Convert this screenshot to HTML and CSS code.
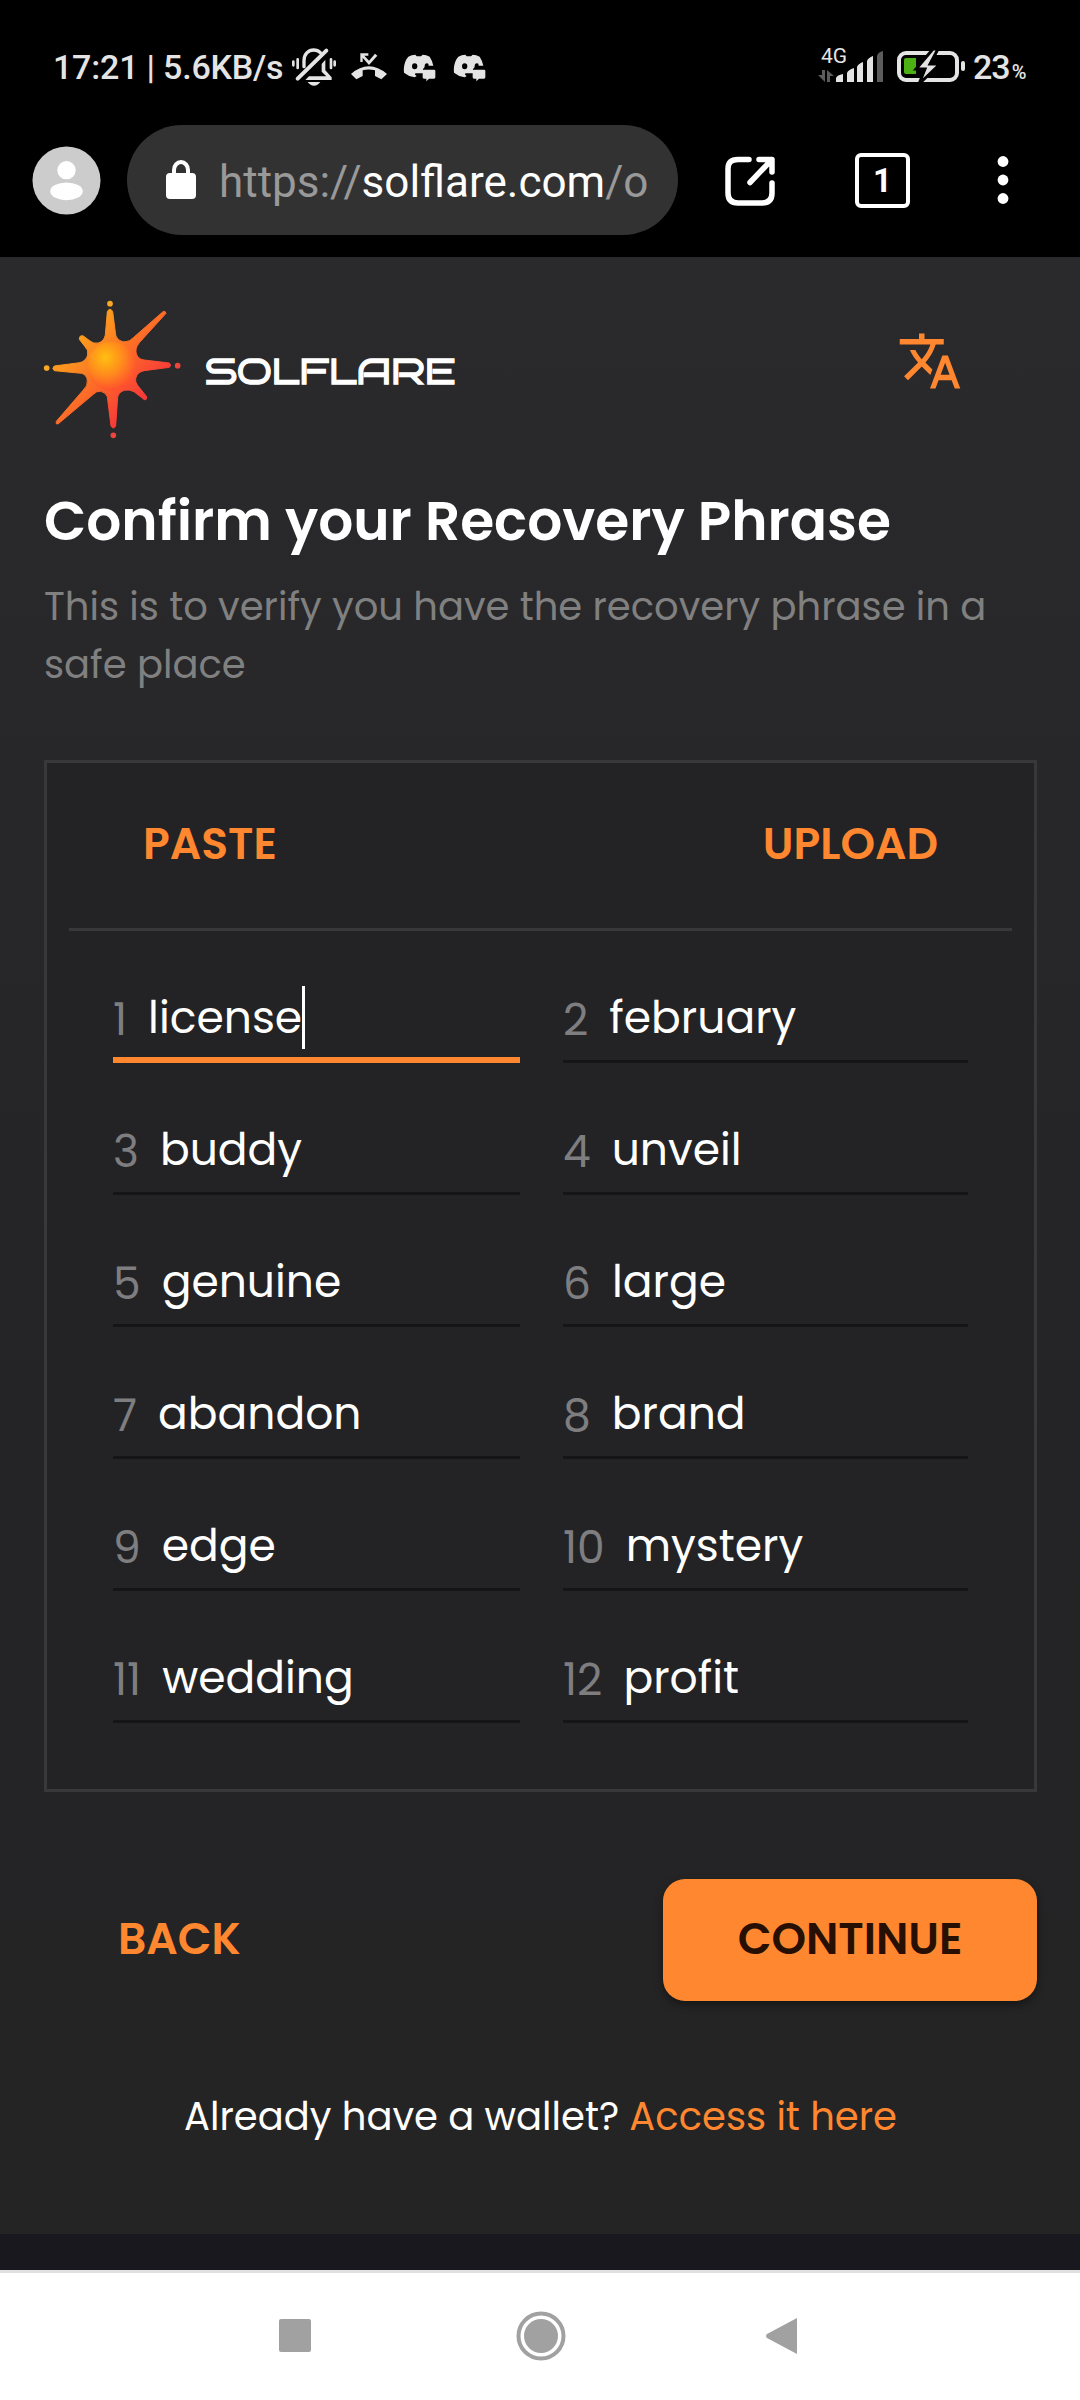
FILE: index.html
```html
<!DOCTYPE html>
<html lang="en">
<head>
<meta charset="utf-8">
<title>Solflare</title>
<link rel="stylesheet" href="styles.css">
</head>
<body>
<div class="status">
  <span class="clock">17:21 | 5.6KB/s</span>
  <svg class="st-icons" viewBox="0 0 630 156" fill="#e4e4e4">
    <g fill="none" stroke="#e4e4e4" stroke-linecap="round">
      <path d="M57 80V62C57 42 70 30 86 30C94 30 101 33 106 38" stroke-width="10"/>
      <path d="M38 116L124 32" stroke-width="12"/>
      <path d="M25 65V76M38 58V84M138 58V84M149 65V76" stroke-width="8"/>
    </g>
    <path d="M121 59V91L140 112V120H61L72 109H124L110 95V72Z"/>
    <path d="M68 126H106Q98 137 87 137Q76 137 68 126Z"/>
    <path d="M198 102Q251 56 306 102L289 118L270 108V91Q251 86 233 91V108L214 118Z"/>
    <path d="M226 40H250V47H238L252 62L270 41L277 47L252 75L233 53V66H226Z"/>
    <g id="chat">
      <path fill-rule="evenodd" d="M357 98C355 78 360 61 370 50Q380 44 391 44L395 49H408L413 44Q424 44 434 50Q441 60 445 77H431Q432 70 426 70Q419 70 419 79Q419 84 414 87V100H391L390 104L395 108L389 112Q370 109 357 98ZM389 70A8 9 0 1 0 389 88A8 9 0 1 0 389 70Z"/>
      <path d="M417 89H447Q451 89 451 93V112Q451 116 447 116H432L424 124V116H417Q413 116 413 112V93Q413 89 417 89Z"/>
    </g>
    <use href="#chat" x="150"/>
  </svg>
  <span class="grow"></span>
  <div class="net">
    <span class="net-type">4G</span>
    <svg class="arrows" viewBox="0 0 16 12" fill="#5c5c5c"><path d="M4 0H7V12L0 5H4ZM9 12V0L16 6H12V12Z"/></svg>
  </div>
  <svg class="bars" viewBox="0 0 48 32" fill="#e4e4e4"><path d="M0 31V27Q1 24 7 23V31ZM11 31V22Q12 19 18 17V31ZM21 31V16Q22 13 27 11V31ZM31 31V10Q32 7 37 5V31Z"/><path fill="#5c5c5c" d="M41 31V5Q42 1 47 0V31Z"/></svg>
  <svg class="battery" viewBox="0 0 70 32"><rect x="2" y="3" width="58" height="27" rx="7" fill="none" stroke="#e4e4e4" stroke-width="4"/><path fill="#4caf13" d="M9 8H19V24H9Q7 24 7 22V10Q7 8 9 8Z"/><path d="M36 -1L19 19H28L22 34L43 14H33L41 -1Z" fill="#e4e4e4" stroke="#000" stroke-width="3"/><rect x="64" y="11" width="4" height="10" rx="2" fill="#e4e4e4"/></svg>
  <span class="pct">23<small>%</small></span>
</div>
<div class="toolbar">
  <svg class="avatar" viewBox="0 0 70 70"><circle cx="35" cy="35" r="34.500" fill="#ccc"/><circle cx="35" cy="24.500" r="9.300" fill="#fff"/><ellipse cx="35" cy="46" rx="16.500" ry="9" fill="#fff"/></svg>
  <div class="url">
    <svg class="lock" viewBox="0 0 30 40"><path d="M8 16V10a7 8 0 0 1 14 0V16" fill="none" stroke="#fff" stroke-width="4"/><rect y="13" width="30" height="26" rx="4" fill="#fff"/></svg>
    <span class="address">https://<b>solflare.com</b>/o</span>
  </div>
  <svg class="share" viewBox="0 0 50 50" fill="none" stroke="#fff" stroke-width="5.500" stroke-linecap="round" stroke-linejoin="round"><path d="M24 3.500H13Q3 3.500 3 13V37Q3 47 13 47H37Q47 47 47 37V27M34 3.500H47V16M46 4.500L25 26.500"/></svg>
  <span class="tabs">1</span>
  <svg class="dots" viewBox="0 0 12 50" fill="#fff"><circle cx="6" cy="6.500" r="5.400"/><circle cx="6" cy="25" r="5.400"/><circle cx="6" cy="43.500" r="5.400"/></svg>
</div>
<main class="page">
  <header class="brand">
    <svg class="sun" viewBox="30 54 435 426">
      <defs>
        <linearGradient id="ray" gradientUnits="userSpaceOnUse" x1="140" y1="160" x2="335" y2="350"><stop offset="0" stop-color="#fba41c"/><stop offset=".5" stop-color="#fd7026"/><stop offset="1" stop-color="#f73b38"/></linearGradient>
        <radialGradient id="core" gradientUnits="userSpaceOnUse" cx="226" cy="233" r="102"><stop offset="0" stop-color="#ffbf10"/><stop offset=".5" stop-color="#ff8d1c"/><stop offset="1" stop-color="#ff4f2e"/></radialGradient>
      </defs>
      <path fill="url(#ray)" stroke="url(#ray)" stroke-width="3" d="M232 95Q240 80 248 95L257 165C262 180 275 187 288 185Q300 184 310 173L398 96Q406 90 408 100L328 188Q314 205 319 222Q325 238 342 240L418 249Q426 256 418 262L342 272Q322 276 317 295Q315 305 322 315L350 350Q352 360 343 359L312 335Q298 327 283 331Q265 337 263 352L257 438Q250 450 243 438L232 350Q226 336 212 334Q200 332 190 343L84 432Q76 434 79 424L160 330Q174 318 172 300Q170 285 155 280L73 272Q64 265 73 258L150 248Q168 243 173 225Q176 210 165 200L148 178Q148 164 160 168L180 183Q190 192 205 189Q222 184 226 165Z"/>
      <circle cx="245" cy="259" r="74" fill="url(#core)"/>
      <g><circle cx="240" cy="71" r="8.500" fill="#f9a825"/><circle cx="50" cy="264" r="8.500" fill="#f9a825"/><circle cx="443" cy="257" r="8.500" fill="#ee453c"/><circle cx="250" cy="466" r="8.500" fill="#ee453c"/></g>
    </svg>
    <span class="wordmark">SOLFLARE</span>
    <svg class="translate" viewBox="0 0 24 24" fill="#ff872f"><path d="M12.870 15.070l-2.540-2.510.03-.03c1.740-1.940 2.980-4.170 3.710-6.530H17V4h-7V2H8v2H1v1.990h11.170C11.500 7.920 10.440 9.750 9 11.350 8.070 10.320 7.300 9.190 6.690 8h-2c.73 1.630 1.730 3.170 2.980 4.560l-5.090 5.020L4 19l5-5 3.110 3.110.76-2.040zM18.500 10h-2L12 22h2l1.120-3h4.750L21 22h2l-4.500-12zm-2.620 7l1.620-4.330L19.120 17h-3.240z"/></svg>
  </header>
  <h1>Confirm your Recovery Phrase</h1>
  <p class="lead">This is to verify you have the recovery phrase in a safe place</p>
  <section class="box">
    <div class="actions"><span class="btn">PASTE</span><span class="btn">UPLOAD</span></div>
    <div class="grid">
      <div class="field focus"><i>1</i><span>license</span><span class="caret"></span></div>
      <div class="field"><i>2</i><span>february</span></div>
      <div class="field"><i>3</i><span>buddy</span></div>
      <div class="field"><i>4</i><span>unveil</span></div>
      <div class="field"><i>5</i><span>genuine</span></div>
      <div class="field"><i>6</i><span>large</span></div>
      <div class="field"><i>7</i><span>abandon</span></div>
      <div class="field"><i>8</i><span>brand</span></div>
      <div class="field"><i>9</i><span>edge</span></div>
      <div class="field"><i>10</i><span>mystery</span></div>
      <div class="field"><i>11</i><span>wedding</span></div>
      <div class="field"><i>12</i><span>profit</span></div>
    </div>
  </section>
  <div class="nav"><span class="btn back">BACK</span><span class="btn continue">CONTINUE</span></div>
  <p class="access">Already have a wallet? <a>Access it here</a></p>
</main>
<div class="strip"></div>
<footer class="sysnav">
  <svg class="square" viewBox="0 0 32 33"><rect width="32" height="33" rx="2" fill="#a1a1a1"/></svg>
  <svg class="home" viewBox="0 0 50 50" fill="#a1a1a1"><circle cx="25" cy="25" r="22.500" fill="none" stroke="#a1a1a1" stroke-width="4"/><circle cx="25" cy="25" r="17"/></svg>
  <svg class="prev" viewBox="0 0 32 38"><path d="M31 1V37L1 21Q-1 19 1 17Z" fill="#a1a1a1"/></svg>
</footer>
</body>
</html>
```
FILE: styles.css
```css
* { box-sizing: border-box; }
body { margin: 0; width: 1080px; height: 2400px; overflow: hidden; background: #000; color: #fff; font-family: Poppins, Inter, sans-serif; display: flex; flex-direction: column; }
svg { display: block; flex: none; }
.grow { flex: 1; }

.status { height: 125px; padding: 40px 54px 0 53px; display: flex; align-items: flex-start; font-family: Roboto, sans-serif; color: #e4e4e4; }
.clock { width: 232px; font-size: 34px; font-weight: 500; line-height: 54px; letter-spacing: -0.2px; white-space: nowrap; }
.st-icons { width: 210px; height: 52px; }
.net { width: 18px; padding-top: 4px; }
.net-type { display: block; font-size: 21px; line-height: 24px; padding-left: 3px; }
.arrows { width: 16px; height: 12px; margin-top: 2px; }
.bars { width: 48px; height: 32px; margin: 11px 13px 0 0; }
.battery { width: 70px; height: 32px; margin: 10px 6px 0 0; overflow: visible; }
.pct { width: 53px; font-size: 34px; font-weight: 500; line-height: 54px; letter-spacing: -1px; white-space: nowrap; }
.pct small { font-size: 20px; letter-spacing: -2px; margin-left: 2px; }

.toolbar { height: 132px; padding: 0 70px 0 32px; display: flex; align-items: flex-start; font-family: Roboto, sans-serif; }
.avatar { width: 69px; height: 69px; margin: 21px 26px 0 0; }
.url { width: 551px; height: 110px; border-radius: 55px; background: #323232; display: flex; align-items: center; padding-left: 39px; flex: none; }
.lock { width: 30px; height: 40px; margin: 0 23px 1px 0; }
.address { font-size: 44px; line-height: 54px; color: #999; white-space: nowrap; margin-top: 4px; }
.address b { font-weight: 400; color: #fff; }
.share { width: 50px; height: 50px; margin: 31px 0 0 47px; }
.tabs { width: 55px; height: 55px; margin: 28px 0 0 80px; border: 4px solid #fff; border-radius: 6px; font-size: 33px; font-weight: 700; line-height: 48px; text-align: center; }
.dots { width: 12px; height: 50px; margin: 30px 0 0 87px; }

.page { height: 1977px; padding: 0 43px 0 44px; background: linear-gradient(#2a2a2c, #242426 60%, #242425); }
.brand { height: 232px; display: flex; align-items: flex-start; }
.sun { width: 145px; height: 142px; margin: 41px 0 0 -4px; }
.wordmark { width: 252px; margin: 91px 0 0 20px; font-family: "Bruno Ace", Orbitron, sans-serif; font-size: 36px; line-height: 48px; -webkit-text-stroke: 1.3px #fff; }
.translate { width: 66px; height: 66px; margin: 71px 0 0 440px; }
h1 { margin: 0; font-size: 55px; line-height: 64px; font-weight: 600; white-space: nowrap; }
.lead { margin: 25px 0 66px; font-size: 38.5px; line-height: 58px; color: #808080; }

.box { height: 1032px; border: 3px solid #38383a; background: #232325; padding: 0 22px; }
.actions { height: 168px; padding: 0 74px 3px; border-bottom: 3px solid #38383a; display: flex; justify-content: space-between; align-items: center; }
.btn { font-size: 44px; line-height: 44px; font-weight: 600; color: #ff872f; }
.grid { display: grid; grid-template-columns: 407px 405px; column-gap: 43px; grid-auto-rows: 132px; padding: 56px 0 0 44px; }
.field { height: 76px; border-bottom: 3px solid #151517; display: flex; font-size: 44px; line-height: 60px; padding-top: 1px; }
.field i { font-style: normal; color: #7e7e80; padding-top: 2px; margin-right: 21px; }
.focus { border-bottom: 6px solid #ff872f; }
.caret { width: 3px; height: 63px; background: #fff; margin-top: -2px; }

.nav { margin-top: 87px; height: 122px; display: flex; justify-content: space-between; align-items: center; }
.back { padding: 0 0 2px 74px; }
.continue { width: 374px; height: 122px; line-height: 120px; border-radius: 22px; background: #ff872f; color: #271003; text-align: center; box-shadow: 0 4px 8px rgba(0, 0, 0, .4); }
.access { margin: 87px 0 0; text-align: center; font-size: 38.5px; line-height: 58px; white-space: nowrap; }
.access a { color: #ff872f; }

.strip { height: 36px; background: #19181e; }
.sysnav { height: 130px; border-top: 3px solid #e0e0e0; background: #fff; display: flex; align-items: center; padding: 0 0 2px 279px; }
.square { width: 32px; height: 33px; }
.home { width: 50px; height: 50px; margin: 0 200px 0 205px; }
.prev { width: 32px; height: 38px; }
```
